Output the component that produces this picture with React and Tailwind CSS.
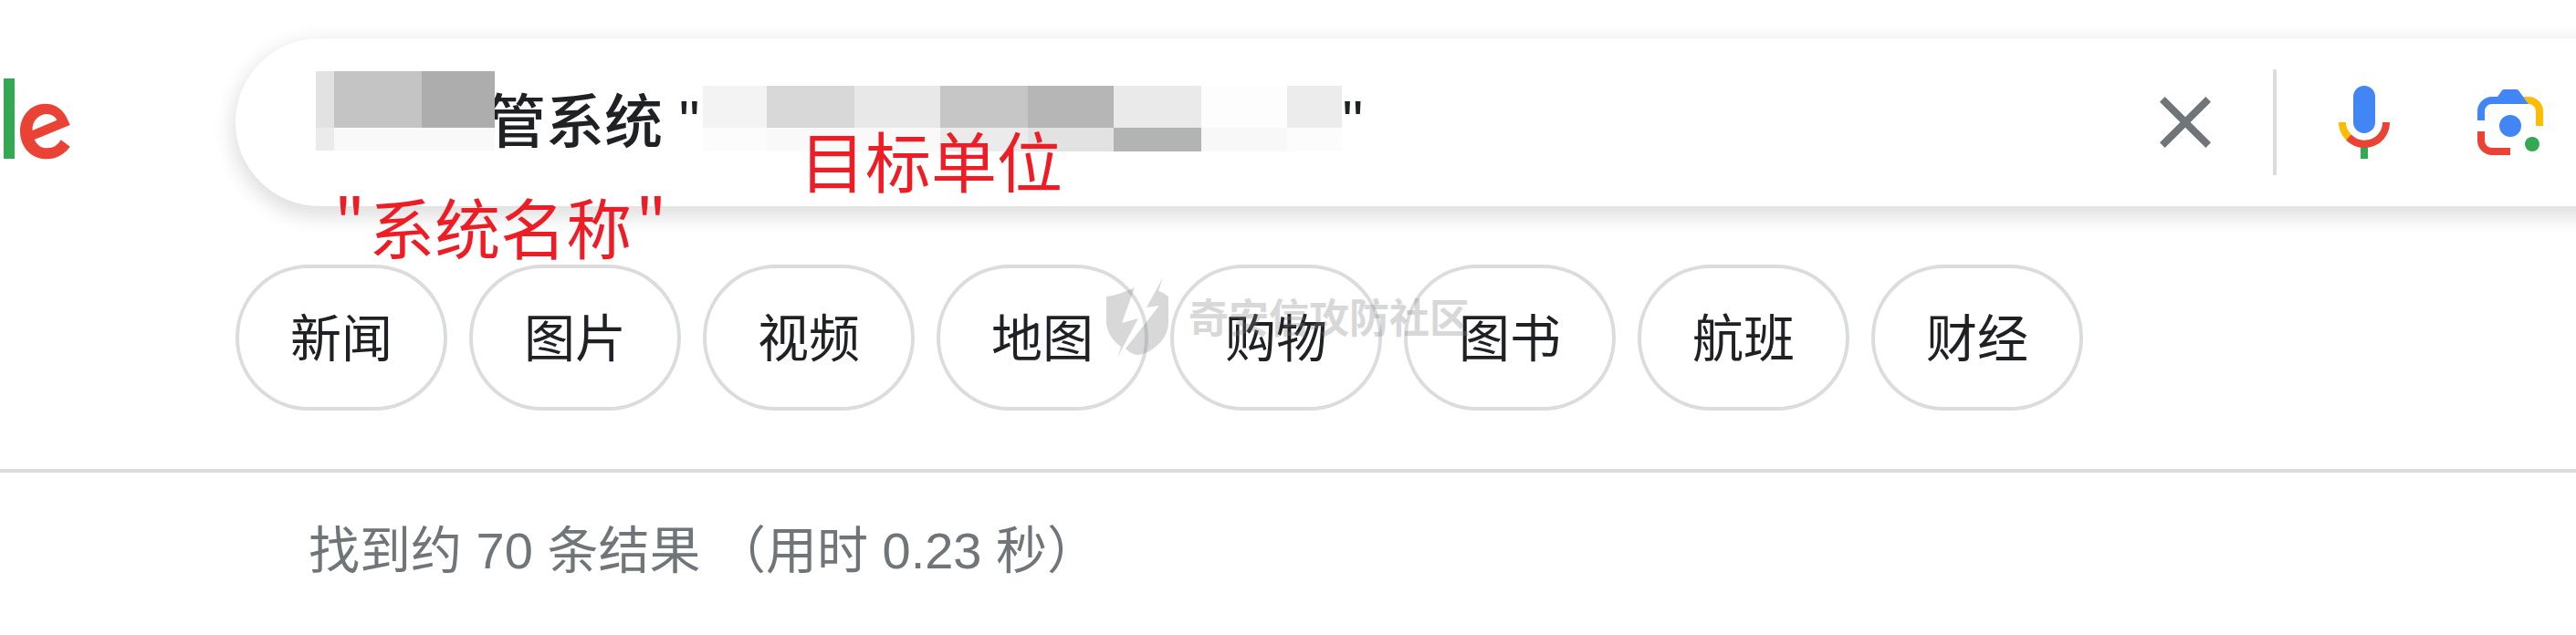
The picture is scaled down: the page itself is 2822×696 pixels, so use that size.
const FILTERS = ["新闻", "图片", "视频", "地图", "购物", "图书", "航班", "财经"];

const QUERY = "\u3000".repeat(3) + '管系统 "' + "\u3000".repeat(11) + '"';

function LogoTail() {
  return (
    <svg viewBox="0 0 80 96" className="h-24 w-20" aria-hidden="true">
      <rect x="4" y="2" width="12" height="88" fill="#34a853" />
      <path
        d="M66.700 69.300 L76.700 76.700 C72 83.500 63.500 90.300 51 90.300 C34 90.300 22 77 22 60 C22 42 34.500 29.700 49.500 29.700 C64.500 29.700 72 41 74.500 48 L76.700 53 L37.700 69 C40.500 75 45 78.300 51.500 78.300 C58.500 78.300 63.500 75 66.700 69.300 Z M35.500 59 L62.300 47.700 C61 44 56.500 41 51 41 C43.500 41 35 47.500 35.500 59 Z"
        fill="#ea4335"
      />
    </svg>
  );
}

function CloseIcon() {
  return (
    <svg viewBox="0 0 24 24" className="size-24" fill="#70757a" aria-hidden="true">
      <path d="M19 6.410 17.590 5 12 10.590 6.410 5 5 6.410 10.590 12 5 17.590 6.410 19 12 13.410 17.590 19 19 17.590 13.410 12z" />
    </svg>
  );
}

function MicIcon() {
  return (
    <svg viewBox="0 0 24 24" className="size-24" aria-hidden="true">
      <path fill="#4285f4" d="m12 15c1.66 0 3-1.31 3-2.97v-7.02c0-1.66-1.34-3.01-3-3.01s-3 1.34-3 3.01v7.02c0 1.66 1.34 2.97 3 2.97z" />
      <path fill="#34a853" d="m11 18.08h2v3.92h-2z" />
      <path fill="#fbbc04" d="m7.05 16.87c-1.27-1.33-2.05-2.83-2.05-4.87h2c0 1.45 0.56 2.42 1.47 3.38v0.32l-1.15 1.18z" />
      <path fill="#ea4335" d="m12 16.93a4.97 5.25 0 0 1 -3.54 -1.55l-1.41 1.49c1.26 1.34 3.02 2.13 4.95 2.13 3.87 0 6.99-2.92 6.99-7h-1.99c0 2.92-2.24 4.93-5 4.93z" />
    </svg>
  );
}

function LensIcon() {
  return (
    <svg viewBox="0 0 96 96" className="size-24" aria-hidden="true">
      <path fill="#fbbc04" d="M62 20h6a16 16 0 0 1 16 16v16h-8V36a8 8 0 0 0-8-8z" />
      <path fill="#4285f4" d="M12 46V36a16 16 0 0 1 16-16h6l5-7q1-1 2-1h14q1 0 2 1l11 15H28a8 8 0 0 0-8 8v10z" />
      <path fill="#ea4335" d="M12 58h8v10a8 8 0 0 0 8 8h20v8H28a16 16 0 0 1-16-16z" />
      <circle cx="48" cy="52" r="12" fill="#4285f4" />
      <circle cx="72" cy="72" r="8" fill="#34a853" />
    </svg>
  );
}

function Watermark() {
  return (
    <div className="pointer-events-none absolute top-[302px] left-[1210px] flex items-center gap-5 opacity-30">
      <svg viewBox="0 0 72 92" className="h-[92px] w-[72px]" fill="#808080" aria-hidden="true">
        <path d="M2 23 C12 22 23 18 33 13 L19 52 L37 47 L14 90 L18 78 C9 72 2 61 2 51 Z" />
        <path d="M64 2 L46 35 L60 33 L23 80 Q29 86 36 87 C46 87 70 74 70 51 L70 23 Q65 19 59 17 Z" />
      </svg>
      <span className="pt-1 text-[44px] leading-[48px] font-bold whitespace-nowrap text-[#808080]">奇安信攻防社区</span>
    </div>
  );
}

export default function App() {
  return (
    <div
      lang="zh-CN"
      className="relative min-h-screen overflow-hidden bg-white pt-[42px] font-['Liberation_Sans','Noto_Sans_CJK_SC',sans-serif] text-[#202124]"
    >
      <header className="flex items-start">
        <a href="#home" aria-label="首页" className="mt-[42px] w-[258px] shrink-0">
          <LogoTail />
        </a>
        <form
          role="search"
          className="relative -mr-16 flex h-[184px] flex-1 items-center rounded-l-full bg-white pr-[88px] shadow-[0_8px_20px_4px_rgba(64,60,67,0.16)]"
        >
          <input
            type="text"
            aria-label="搜索"
            defaultValue={QUERY}
            className="h-24 min-w-0 flex-1 bg-transparent pl-[84px] text-[64px] font-medium outline-none"
          />
          <div className="absolute top-9 left-[88px] grid grid-cols-[20px_96px_80px] grid-rows-[62px_25px]">
            <span className="bg-[#e2e2e2]" />
            <span className="bg-[#c4c4c4]" />
            <span className="bg-[#adadad]" />
            <span className="bg-[#ebebeb]" />
            <span className="col-span-2 bg-[#f9f9f9]" />
          </div>
          <div className="absolute top-[52px] left-[512px] grid grid-cols-[70px_96px_94px_96px_94px_96px_94px_60px] grid-rows-[46px_26px]">
            <span className="bg-[#f3f3f3]" />
            <span className="bg-[#d8d8d8]" />
            <span className="bg-[#e8e8e8]" />
            <span className="bg-[#c6c6c6]" />
            <span className="bg-[#b6b6b6]" />
            <span className="bg-[#eaeaea]" />
            <span className="bg-[#fdfdfd]" />
            <span className="bg-[#ececec]" />
            <span className="bg-[#fcfcfc]" />
            <span className="bg-[#f9f9f9]" />
            <span className="bg-[#f9f9f9]" />
            <span className="bg-[#ebebeb]" />
            <span className="bg-[#e2e2e2]" />
            <span className="bg-[#b2b4b3]" />
            <span className="bg-[#f8f8f8]" />
            <span className="bg-[#fcfcfc]" />
          </div>
          <button type="button" aria-label="清除">
            <CloseIcon />
          </button>
          <span className="mr-12 ml-12 h-[116px] w-1 bg-[#dadce0]" />
          <button type="button" aria-label="语音搜索">
            <MicIcon />
          </button>
          <button type="button" aria-label="按图搜索" className="ml-16">
            <LensIcon />
          </button>
          <span className="absolute top-[90px] left-[618px] text-[72px] leading-[96px] whitespace-nowrap text-[#ee1c25]">
            目标单位
          </span>
          <span className="absolute top-[157px] left-[108px] flex gap-1 font-['Noto_Sans_CJK_SC',sans-serif] text-[72px] leading-[96px] whitespace-nowrap text-[#ee1c25]">
            <span>"</span>
            <span>系统名称</span>
            <span>"</span>
          </span>
        </form>
      </header>

      <nav aria-label="搜索类型" className="mt-16 flex gap-6 pl-[258px]">
        {FILTERS.map((name) => (
          <a
            key={name}
            href={"#" + name}
            className="flex h-40 items-center rounded-full border-4 border-[#dadce0] px-14 pt-1 text-[56px] leading-[64px] whitespace-nowrap"
          >
            {name}
          </a>
        ))}
      </nav>

      <main className="mt-16 border-t-4 border-[#dadce0] pt-[50px] pl-[338px]">
        <p className="text-[56px] leading-[72px] text-[#70757a]">找到约 70 条结果 （用时 0.23 秒）</p>
      </main>

      <Watermark />
    </div>
  );
}
